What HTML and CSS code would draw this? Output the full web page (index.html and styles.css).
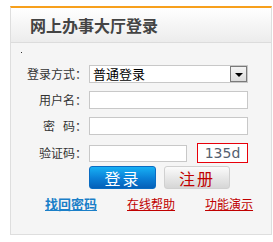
FILE: index.html
```html
<!DOCTYPE html>
<html lang="zh-CN">
<head>
<meta charset="utf-8">
<title>网上办事大厅登录</title>
<link rel="stylesheet" href="styles.css">
</head>
<body>
<div class="panel">
  <div class="panel-head"><h1 class="title">网上办事大厅登录</h1></div>
  <div class="panel-body">
    <div class="dot"></div>
    <div class="form">
      <label class="lbl">登录方式：</label>
      <div class="select">
        <span class="select-text">普通登录</span>
        <span class="select-btn"><span class="arrow"></span></span>
      </div>
      <label class="lbl">用户名：</label>
      <div class="input"></div>
      <label class="lbl">密&nbsp;&nbsp;&nbsp;码：</label>
      <div class="input"></div>
      <label class="lbl">验证码：</label>
      <div class="code-row">
        <div class="input short"></div>
        <div class="captcha">135d</div>
      </div>
      <div></div>
      <div class="buttons">
        <span class="btn btn-login">登录</span>
        <span class="btn btn-reg">注册</span>
      </div>
    </div>
    <div class="links">
      <a class="link blue" href="#">找回密码</a>
      <a class="link red" href="#">在线帮助</a>
      <a class="link red" href="#">功能演示</a>
    </div>
  </div>
</div>
</body>
</html>
```
FILE: styles.css
```css
* { box-sizing: border-box; }
body {
  margin: 0;
  background: #fff;
  font-family: "Noto Sans CJK SC", "Liberation Sans", sans-serif;
  font-size: 12px;
  color: #333;
}
.panel {
  margin: 6px 0 0 10px;
  width: 262px;
  height: 229px;
  border: 1px solid #dedede;
  border-top: 2px solid #f7a01c;
  display: flex;
  flex-direction: column;
}
.panel-head {
  height: 35px;
  background: linear-gradient(#ffffff, #ececec);
  border-bottom: 1px solid #dcdcdc;
  display: flex;
  align-items: center;
  padding-left: 19px;
}
.title {
  margin: 0;
  font-size: 16px;
  font-weight: bold;
  color: #444;
  line-height: 18px;
}
.panel-body {
  flex: 1;
  background: #f5f5f5;
  padding-top: 9px;
}
.dot {
  width: 1px;
  height: 1px;
  background: #333;
  margin-left: 10px;
}
.form {
  margin-top: 12px;
  display: grid;
  grid-template-columns: 78px 159px;
  row-gap: 8px;
  align-items: center;
}
.lbl {
  text-align: right;
  padding-right: 2px;
  color: #333;
  font-size: 12px;
  line-height: 16px;
}
.select {
  height: 18px;
  border: 1px solid #c8c8c8;
  background: #fff;
  display: flex;
  align-items: center;
  justify-content: space-between;
}
.select-text {
  font-size: 13px;
  color: #000;
  padding-left: 3px;
  line-height: 16px;
}
.select-btn {
  width: 17px;
  height: 16px;
  border: 1px solid #7a7a7a;
  background: linear-gradient(#f4f4f4, #dcdcdc);
  display: flex;
  align-items: center;
  justify-content: center;
}
.arrow {
  width: 0;
  height: 0;
  border-left: 4px solid transparent;
  border-right: 4px solid transparent;
  border-top: 4px solid #000;
  margin-top: 1px;
}
.input {
  height: 18px;
  border: 1px solid #c8c8c8;
  background: #fff;
}
.code-row {
  display: flex;
  align-items: center;
  gap: 10px;
}
.input.short { width: 100px; height: 17px; }
.captcha {
  width: 52px;
  height: 20px;
  border: 1px solid #e8000a;
  background: #fff;
  color: #556070;
  font-family: "DejaVu Sans", sans-serif;
  font-size: 14px;
  line-height: 18px;
  text-align: center;
}
.buttons {
  display: flex;
  gap: 8px;
  margin-top: -5px;
}
.btn {
  width: 67px;
  height: 23px;
  display: flex;
  align-items: center;
  justify-content: center;
  font-size: 16px;
  letter-spacing: 2px;
  border-radius: 3px;
}
.btn-login {
  background: linear-gradient(#17b0f4, #0a7fd6 55%, #0560b8);
  color: #fff;
  border: 1px solid #0a6cc2;
}
.btn-reg {
  width: 66px;
  background: linear-gradient(#fbfbfb, #e6e6e6 55%, #d6d6d6);
  color: #c00000;
  border: 1px solid #d0d0d0;
}
.links {
  display: flex;
  align-items: baseline;
  margin-top: 6px;
  padding-left: 34px;
  gap: 30px;
  line-height: 17px;
}
.link {
  font-size: 12px;
  text-decoration: underline;
}
.link.blue { color: #1a7fc8; font-weight: bold; font-size: 13px; }
.link.red { color: #c00000; }
```
